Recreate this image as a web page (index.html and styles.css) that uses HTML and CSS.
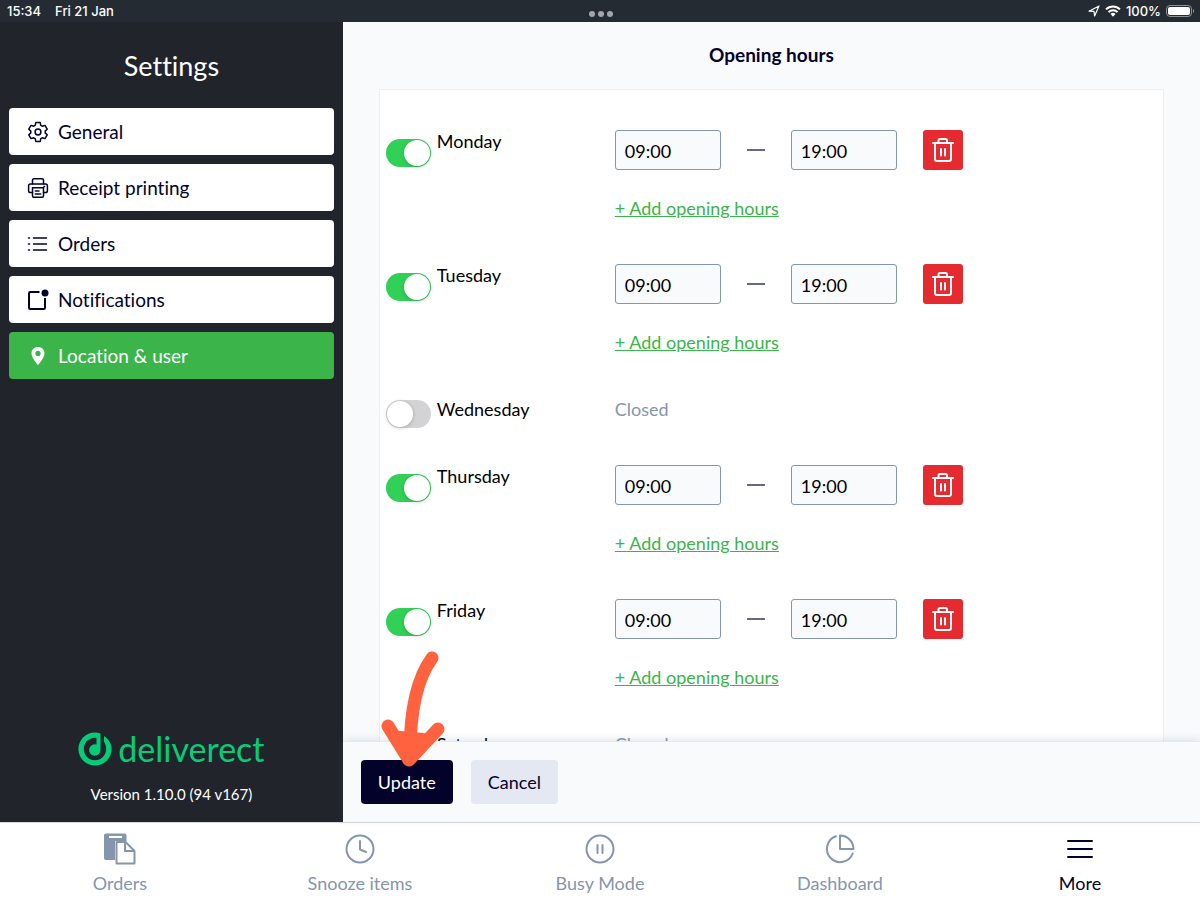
FILE: index.html
```html
<!doctype html>
<html lang="en">
<head>
  <meta charset="utf-8"/>
  <title>Opening hours</title>
  <meta name="viewport" content="width=device-width, initial-scale=1"/>
  <link rel="stylesheet" href="styles.css">
</head>
<body>
  <!-- device status bar -->
  <header class="status">
    <div class="status-left"><span>15:34</span><span>Fri 21 Jan</span></div>
    <div class="dots"><i></i><i></i><i></i></div>
    <div class="status-right">
      <svg width="12" height="12" viewBox="0 0 12 12"><path d="M1 6.2 11 1 6.6 11 6 6.4z" fill="none" stroke="#fff" stroke-width="1.2" stroke-linejoin="round"/></svg>
      <svg width="16" height="12" viewBox="0 0 16 12"><g fill="none" stroke="#fff" stroke-width="2"><path d="M1 4.4a10 10 0 0 1 14 0"/><path d="M3.5 7.1a6.4 6.4 0 0 1 9 0"/></g><path d="M5.5 9a3.6 3.6 0 0 1 5 0L8 11.8z" fill="#fff"/></svg>
      <span>100%</span>
      <svg width="29" height="12" viewBox="0 0 29 12"><rect x=".5" y=".5" width="25" height="11" rx="3.5" fill="none" stroke="#8d9196"/><rect x="2" y="2" width="22" height="8" rx="2" fill="#fff"/><path d="M27 4v4c1.6-.6 1.6-3.4 0-4z" fill="#8d9196"/></svg>
    </div>
  </header>

  <div class="app">
    <aside class="sidebar">
      <h1>Settings</h1>
      <nav class="menu">
        <a href="#general">
          <svg width="22" height="22" viewBox="0 0 22 22" class="line"><path d="M8.8 1.6h4.4l.6 2.7 1.5.9 2.7-.8 2.2 3.8-2 1.9v1.8l2 1.9-2.2 3.8-2.7-.8-1.5.9-.6 2.7H8.800l-.6-2.700-1.500-.9-2.700.8-2.200-3.800 2-1.900v-1.800l-2-1.900L4 4.400l2.700.8 1.500-.9z"/><circle cx="11" cy="11" r="2.900"/></svg>
          General
        </a>
        <a href="#printing">
          <svg width="22" height="22" viewBox="0 0 22 22" class="line"><path d="M5.5 7V3.2c0-.9.5-1.4 1.4-1.4h8.2c.9 0 1.4.5 1.4 1.4V7"/><path d="M5.5 15.5H3.4c-1.1 0-1.8-.7-1.8-1.8V8.9C1.6 7.7 2.3 7 3.4 7h15.2c1.1 0 1.8.7 1.8 1.9v4.8c0 1.1-.7 1.8-1.8 1.8h-2.1"/><path d="M5.5 10.8h11V19c0 .8-.4 1.2-1.2 1.2H6.7c-.8 0-1.2-.4-1.2-1.2zM8.3 14h3.7M8.3 17h5.4M17 9.4h.6"/></svg>
          Receipt printing
        </a>
        <a href="#orders">
          <svg width="22" height="22" viewBox="0 0 22 22" class="line"><path d="M1.5 5h1M1.5 11h1M1.5 17h1M6.5 5h13M6.5 11h13M6.5 17h13"/></svg>
          Orders
        </a>
        <a href="#notifications">
          <svg width="22" height="22" viewBox="0 0 22 22"><path d="M12.500 3H3.200C2.500 3 2 3.500 2 4.200v14.600c0 .7.5 1.200 1.200 1.200h13.600c.7 0 1.200-.5 1.200-1.200V9" fill="none" stroke="#03022b" stroke-width="2"/><circle cx="18" cy="4" r="3.500" fill="#03022b"/></svg>
          Notifications
        </a>
        <a href="#location" class="active">
          <svg width="22" height="22" viewBox="0 0 22 22"><path d="M11 2c-3.700 0-6.500 2.700-6.500 6.400C4.500 12.800 11 20 11 20s6.500-7.200 6.500-11.600C17.500 4.700 14.700 2 11 2zm0 9a2.600 2.600 0 1 1 0-5.200A2.600 2.600 0 0 1 11 11z" fill="#fff"/></svg>
          Location &amp; user
        </a>
      </nav>
      <div class="brand">
        <svg width="34" height="34" viewBox="0 0 34 34" fill="#05cc79"><path d="M22.500 1.400v16.600a5.700 5.700 0 1 1-4-5.400V5.800C11 5 5.800 10.300 5.800 17a11.200 11.200 0 0 0 22.400 0c0-3-.9-5.300-2.200-7.300V4c4.700 2.800 7.600 7.500 7.600 13A16.600 16.600 0 0 1 .4 17C.4 7.800 7.800.4 17 .4c2 0 3.800.4 5.500 1z"/></svg>
        <span>deliverect</span>
      </div>
      <p class="version">Version 1.10.0 (94 v167)</p>
    </aside>

    <main>
      <div class="scroll">
        <h2>Opening hours</h2>
        <div class="card" id="days"></div>
      </div>
      <div class="actions">
        <div class="pointed">
          <button class="btn primary">Update</button>
          <svg class="arrow" width="68" height="120" viewBox="0 0 68 120" fill="none" stroke="#ff623e" stroke-linecap="round" stroke-linejoin="round"><path d="M52 8C38 27 30 58 30 104" stroke-width="13"/><path d="M8 76 29 110 58 79" stroke-width="13"/><path d="M20 84 29 110 44 86z" fill="#ff623e" stroke-width="6"/></svg>
        </div>
        <button class="btn">Cancel</button>
      </div>
    </main>
  </div>

  <!-- bottom tabs -->
  <nav class="tabs">
    <a href="#tab-orders">
      <svg width="34" height="34" viewBox="0 0 34 34"><path d="M1 3.500C1 2.300 1.800 1.500 3 1.500h18.500c1.200 0 2 .8 2 2V9H12v19H3c-1.200 0-2-.8-2-2z" fill="#8595ad"/><path d="M6 4h13v2H6z" fill="#fff"/><path d="M13.500 10h9l9 9v12.500h-18z" fill="#fff" stroke="#8595ad" stroke-width="2" stroke-linejoin="round"/><path d="M22 10v9h9" fill="none" stroke="#8595ad" stroke-width="2"/></svg>
      Orders
    </a>
    <a href="#tab-snooze">
      <svg width="34" height="34" viewBox="0 0 34 34" class="tab-line"><circle cx="17" cy="17" r="13.500"/><path d="M17 9v8.500l6 2.500"/></svg>
      Snooze items
    </a>
    <a href="#tab-busy">
      <svg width="34" height="34" viewBox="0 0 34 34" class="tab-line"><circle cx="17" cy="17" r="13.500"/><path d="M14.500 13v8M19.500 13v8"/></svg>
      Busy Mode
    </a>
    <a href="#tab-dashboard">
      <svg width="34" height="34" viewBox="0 0 34 34" class="tab-line"><path d="M13 4.200A13.300 13.300 0 1 0 29.700 21.500"/><path d="M17 3.500v13.500h13.500A13.500 13.500 0 0 0 17 3.500z"/></svg>
      Dashboard
    </a>
    <a href="#tab-more" class="current">
      <svg width="34" height="34" viewBox="0 0 34 34" class="tab-line"><path d="M5 9h24M5 17h24M5 25h24"/></svg>
      More
    </a>
  </nav>

  <script src="app.js"></script>
</body>
</html>
```
FILE: app.js
```js
const days = [
  {name:'Monday', open:'09:00', close:'19:00'},
  {name:'Tuesday', open:'09:00', close:'19:00'},
  {name:'Wednesday'},
  {name:'Thursday', open:'09:00', close:'19:00'},
  {name:'Friday', open:'09:00', close:'19:00'},
  {name:'Saturday'}
];

const trash = `<svg width="24" height="26" viewBox="0 0 24 26" fill="none" stroke="#fff" stroke-width="2" stroke-linecap="round" stroke-linejoin="round"><path d="M2 6h20M7.500 6V3.500C7.500 2.500 8 2 9 2h5.500c1 0 1.500.5 1.500 1.500V6M4 6v16c0 1.300.7 2 2 2h12c1.300 0 2-.7 2-2V6M10 12v6.500M14 12v6.500"/></svg>`;

function hours(day){
  if(!day.open) return '<div class="hours closed-text">Closed</div>';
  return `
    <div class="hours">
      <div class="times">
        <input class="time" type="text" value="${day.open}" aria-label="${day.name} opens">
        <span class="dash"></span>
        <input class="time" type="text" value="${day.close}" aria-label="${day.name} closes">
        <button class="delete" aria-label="Delete">${trash}</button>
      </div>
      <a class="add" href="#add">+ Add opening hours</a>
    </div>`;
}

document.getElementById('days').innerHTML = days.map(day => `
  <div class="day${day.open ? '' : ' closed'}">
    <input class="switch" type="checkbox" id="${day.name}"${day.open ? ' checked' : ''}>
    <label for="${day.name}">${day.name}</label>
    ${hours(day)}
  </div>`).join('');
```
FILE: styles.css
```css
:root{
  --ink:#03022b;
  --dark:#21252b;
  --green:#3bb54a;
  --grey:#8595ad;
  --pale:#f9fafc;
}
*{box-sizing:border-box;margin:0;padding:0}
body{
  height:100vh;
  display:flex;
  flex-direction:column;
  overflow:hidden;
  font-family:Lato,"Liberation Sans",sans-serif;
  font-size:18px;
  font-variant-ligatures:none;
  color:#000;
}
a{color:inherit;text-decoration:none}
button,input{font:inherit;color:inherit}
svg{display:block;flex-shrink:0}

/* ---------- STATUS BAR ---------- */
.status{
  height:22px;
  flex-shrink:0;
  display:grid;
  grid-template-columns:1fr auto 1fr;
  align-items:center;
  padding:0 5px 0 7px;
  background:#252b33;
  color:#fff;
  font:500 13px/22px Roboto,sans-serif;
  font-family:Inter,sans-serif;
}
.status-left{display:flex;gap:14px}
.status-right{display:flex;align-items:center;justify-content:flex-end;gap:5px}
.dots{display:flex;gap:3px;padding-top:6px}
.dots i{width:6px;height:6px;border-radius:50%;background:#a3a6aa}

/* ---------- SIDEBAR ---------- */
.app{flex:1;min-height:0;display:grid;grid-template-columns:2fr 5fr}
.sidebar{
  display:flex;
  flex-direction:column;
  padding:28px 9px 16px;
  background:var(--dark);
  color:#fff;
}
h1{font-size:27px;line-height:32px;font-weight:400;text-align:center}
.menu{display:flex;flex-direction:column;gap:9px;margin-top:26px}
.menu a{
  display:flex;
  align-items:center;
  gap:9px;
  height:47px;
  padding:0 18px;
  border-radius:4px;
  background:#fff;
  color:var(--ink);
  font-size:19px;
}
.menu a.active{background:var(--green);color:#fff}
.line{fill:none;stroke:var(--ink);stroke-width:1.5;stroke-linecap:round;stroke-linejoin:round}
.brand{
  display:flex;
  align-items:center;
  justify-content:center;
  gap:6px;
  margin-top:auto;
  color:#05cc79;
  font-size:34px;
  line-height:32px;
}
.version{margin-top:16px;font-size:15px;line-height:24px;text-align:center}

/* ---------- OPENING HOURS ---------- */
main{display:flex;flex-direction:column;min-height:0;min-width:0;background:var(--pale)}
.scroll{flex:1;min-height:0;overflow:hidden;padding:22px 36px 0}
h2{color:var(--ink);font-size:19px;line-height:22px;font-weight:700;text-align:center}
.card{
  margin-top:23px;
  padding:40px 6px;
  border:1px solid #eceff4;
  background:#fff;
}
.day{
  display:grid;
  grid-template-columns:45px 172px 1fr;
  column-gap:6px;
  align-items:start;
  height:134px;
}
.day.closed{height:67px}
.day label{line-height:22px}
.switch{
  appearance:none;
  width:45px;
  height:28px;
  margin-top:9px;
  border-radius:14px;
  background:#d3d3d5;
}
.closed .switch{margin-top:2px}
.switch::before{
  content:"";
  display:block;
  width:26px;
  height:26px;
  margin:1px;
  border-radius:50%;
  background:#fff;
  box-shadow:0 1px 4px rgba(0,0,0,.2);
}
.switch:checked{background:#31d158}
.switch:checked::before{margin-left:18px}
.closed-text{color:var(--grey);line-height:22px}
.times{display:flex;align-items:center;margin-bottom:26px}
.time{
  width:106px;
  height:40px;
  padding:1px 9px 0;
  border:1px solid var(--grey);
  border-radius:3px;
  background:var(--pale);
}
.dash{width:18px;height:2px;margin:0 26px;background:#66678a}
.delete{
  display:grid;
  place-items:center;
  width:40px;
  height:40px;
  margin-left:26px;
  border:0;
  border-radius:3px;
  background:#e52b2f;
}
.add{color:var(--green);line-height:24px;text-decoration:underline}

/* ---------- ACTIONS ---------- */
.actions{
  position:relative;
  display:flex;
  gap:18px;
  padding:18px;
  border-top:1px solid #e4e8f0;
  background:var(--pale);
  box-shadow:0 -2px 8px rgba(90,110,150,.16);
}
.pointed{position:relative}
.btn{
  height:44px;
  padding:0 17px;
  border:0;
  border-radius:4px;
  background:#e4e8f2;
  color:var(--ink);
}
.primary{background:var(--ink);color:#fff}
.arrow{position:absolute;left:19px;bottom:34px;pointer-events:none}

/* ---------- TABS ---------- */
.tabs{
  flex-shrink:0;
  display:grid;
  grid-template-columns:repeat(5,1fr);
  height:78px;
  border-top:1px solid #d5d7da;
  background:#fff;
}
.tabs a{
  display:flex;
  flex-direction:column;
  align-items:center;
  gap:6px;
  padding-top:9px;
  color:var(--grey);
  line-height:22px;
}
.tabs .current{color:var(--ink)}
.tab-line{fill:none;stroke:currentColor;stroke-width:2;stroke-linecap:round;stroke-linejoin:round}
```
